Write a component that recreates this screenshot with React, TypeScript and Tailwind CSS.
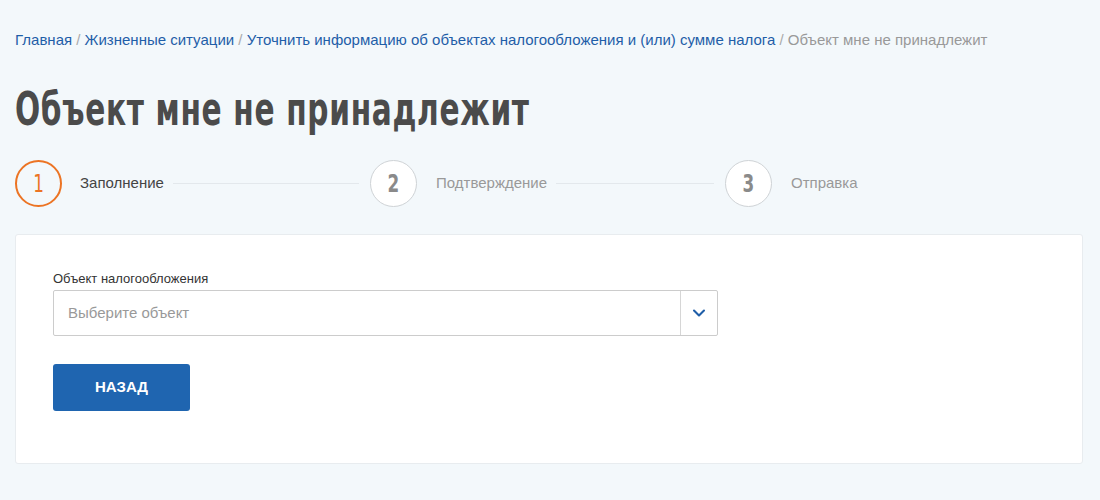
import { FiChevronDown } from 'react-icons/fi';

const crumbs = [
    'Главная',
    'Жизненные ситуации',
    'Уточнить информацию об объектах налогообложения и (или) сумме налога',
];

const steps = [
    { id: 1, name: 'Заполнение', active: true },
    { id: 2, name: 'Подтверждение', active: false },
    { id: 3, name: 'Отправка', active: false },
];

const condensed = { fontFamily: '"DejaVu Sans", sans-serif' };

export default function App() {
    return (
        <div
            className="min-h-[500px] bg-[#f3f8fb] px-[15px] pt-[31px] pb-8"
            style={{ fontFamily: '"Liberation Sans", Arial, sans-serif' }}
        >
            <nav className="text-[15px] leading-[18px] text-[#999]">
                {crumbs.map((c) => (
                    <span key={c}>
                        <a href="#" className="text-[#1f5ea8]">
                            {c}
                        </a>
                        <span className="text-[#aaa]"> / </span>
                    </span>
                ))}
                <span>Объект мне не принадлежит</span>
            </nav>

            <h1
                className="mt-[34px] text-[46px] leading-[52px] font-bold text-[#4b4b4b] tracking-[1px] whitespace-nowrap"
                style={condensed}
            >
                <span className="inline-block origin-left scale-x-[0.645]">Объект мне не принадлежит</span>
            </h1>

            <div className="mt-[25px] flex items-center">
                {steps.map((s, i) => (
                    <div key={s.id} className={i < 2 ? 'flex items-center w-[355px]' : 'flex items-center'}>
                        <div
                            className={
                                s.active
                                    ? 'w-[47px] h-[47px] rounded-full border-2 border-[#ec7424] flex items-center justify-center text-[#ec7424] text-[24px] shrink-0'
                                    : 'w-[47px] h-[47px] rounded-full border border-[#cfd3d6] flex items-center justify-center text-[#8a8a8a] text-[24px] font-bold shrink-0 bg-white'
                            }
                            style={condensed}
                        >
                            <span className="inline-block scale-x-[0.7]">{s.id}</span>
                        </div>
                        <span
                            className={
                                s.active
                                    ? 'ml-[18px] text-[15px] text-[#444]'
                                    : 'ml-[19px] text-[15px] text-[#999]'
                            }
                        >
                            {s.name}
                        </span>
                        {i < 2 && <div className="flex-1 h-px bg-[#e3e8ec] ml-[9px] mr-[11px]" />}
                    </div>
                ))}
            </div>

            <div className="mt-[27px] w-[1068px] bg-white border border-[#e8ecef] rounded-[3px] pl-[37px] pt-[36px] pb-[52px]">
                <label className="block text-[13px] leading-[16px] text-[#333] mb-[3px]">
                    Объект налогообложения
                </label>
                <div className="w-[665px] h-[46px] border border-[#cccccc] rounded-[2px] flex bg-white">
                    <div className="flex-1 flex items-center pl-[14px] text-[15px] text-[#999]">
                        Выберите объект
                    </div>
                    <div className="w-[37px] border-l border-[#d6d6d6] flex items-center justify-center text-[#1f5ea8]">
                        <FiChevronDown size={20} strokeWidth={2.5} />
                    </div>
                </div>
                <button className="mt-[28px] w-[137px] h-[47px] bg-[#1f65b0] rounded-[3px] text-white text-[15px] font-bold">
                    НАЗАД
                </button>
            </div>
        </div>
    );
}
